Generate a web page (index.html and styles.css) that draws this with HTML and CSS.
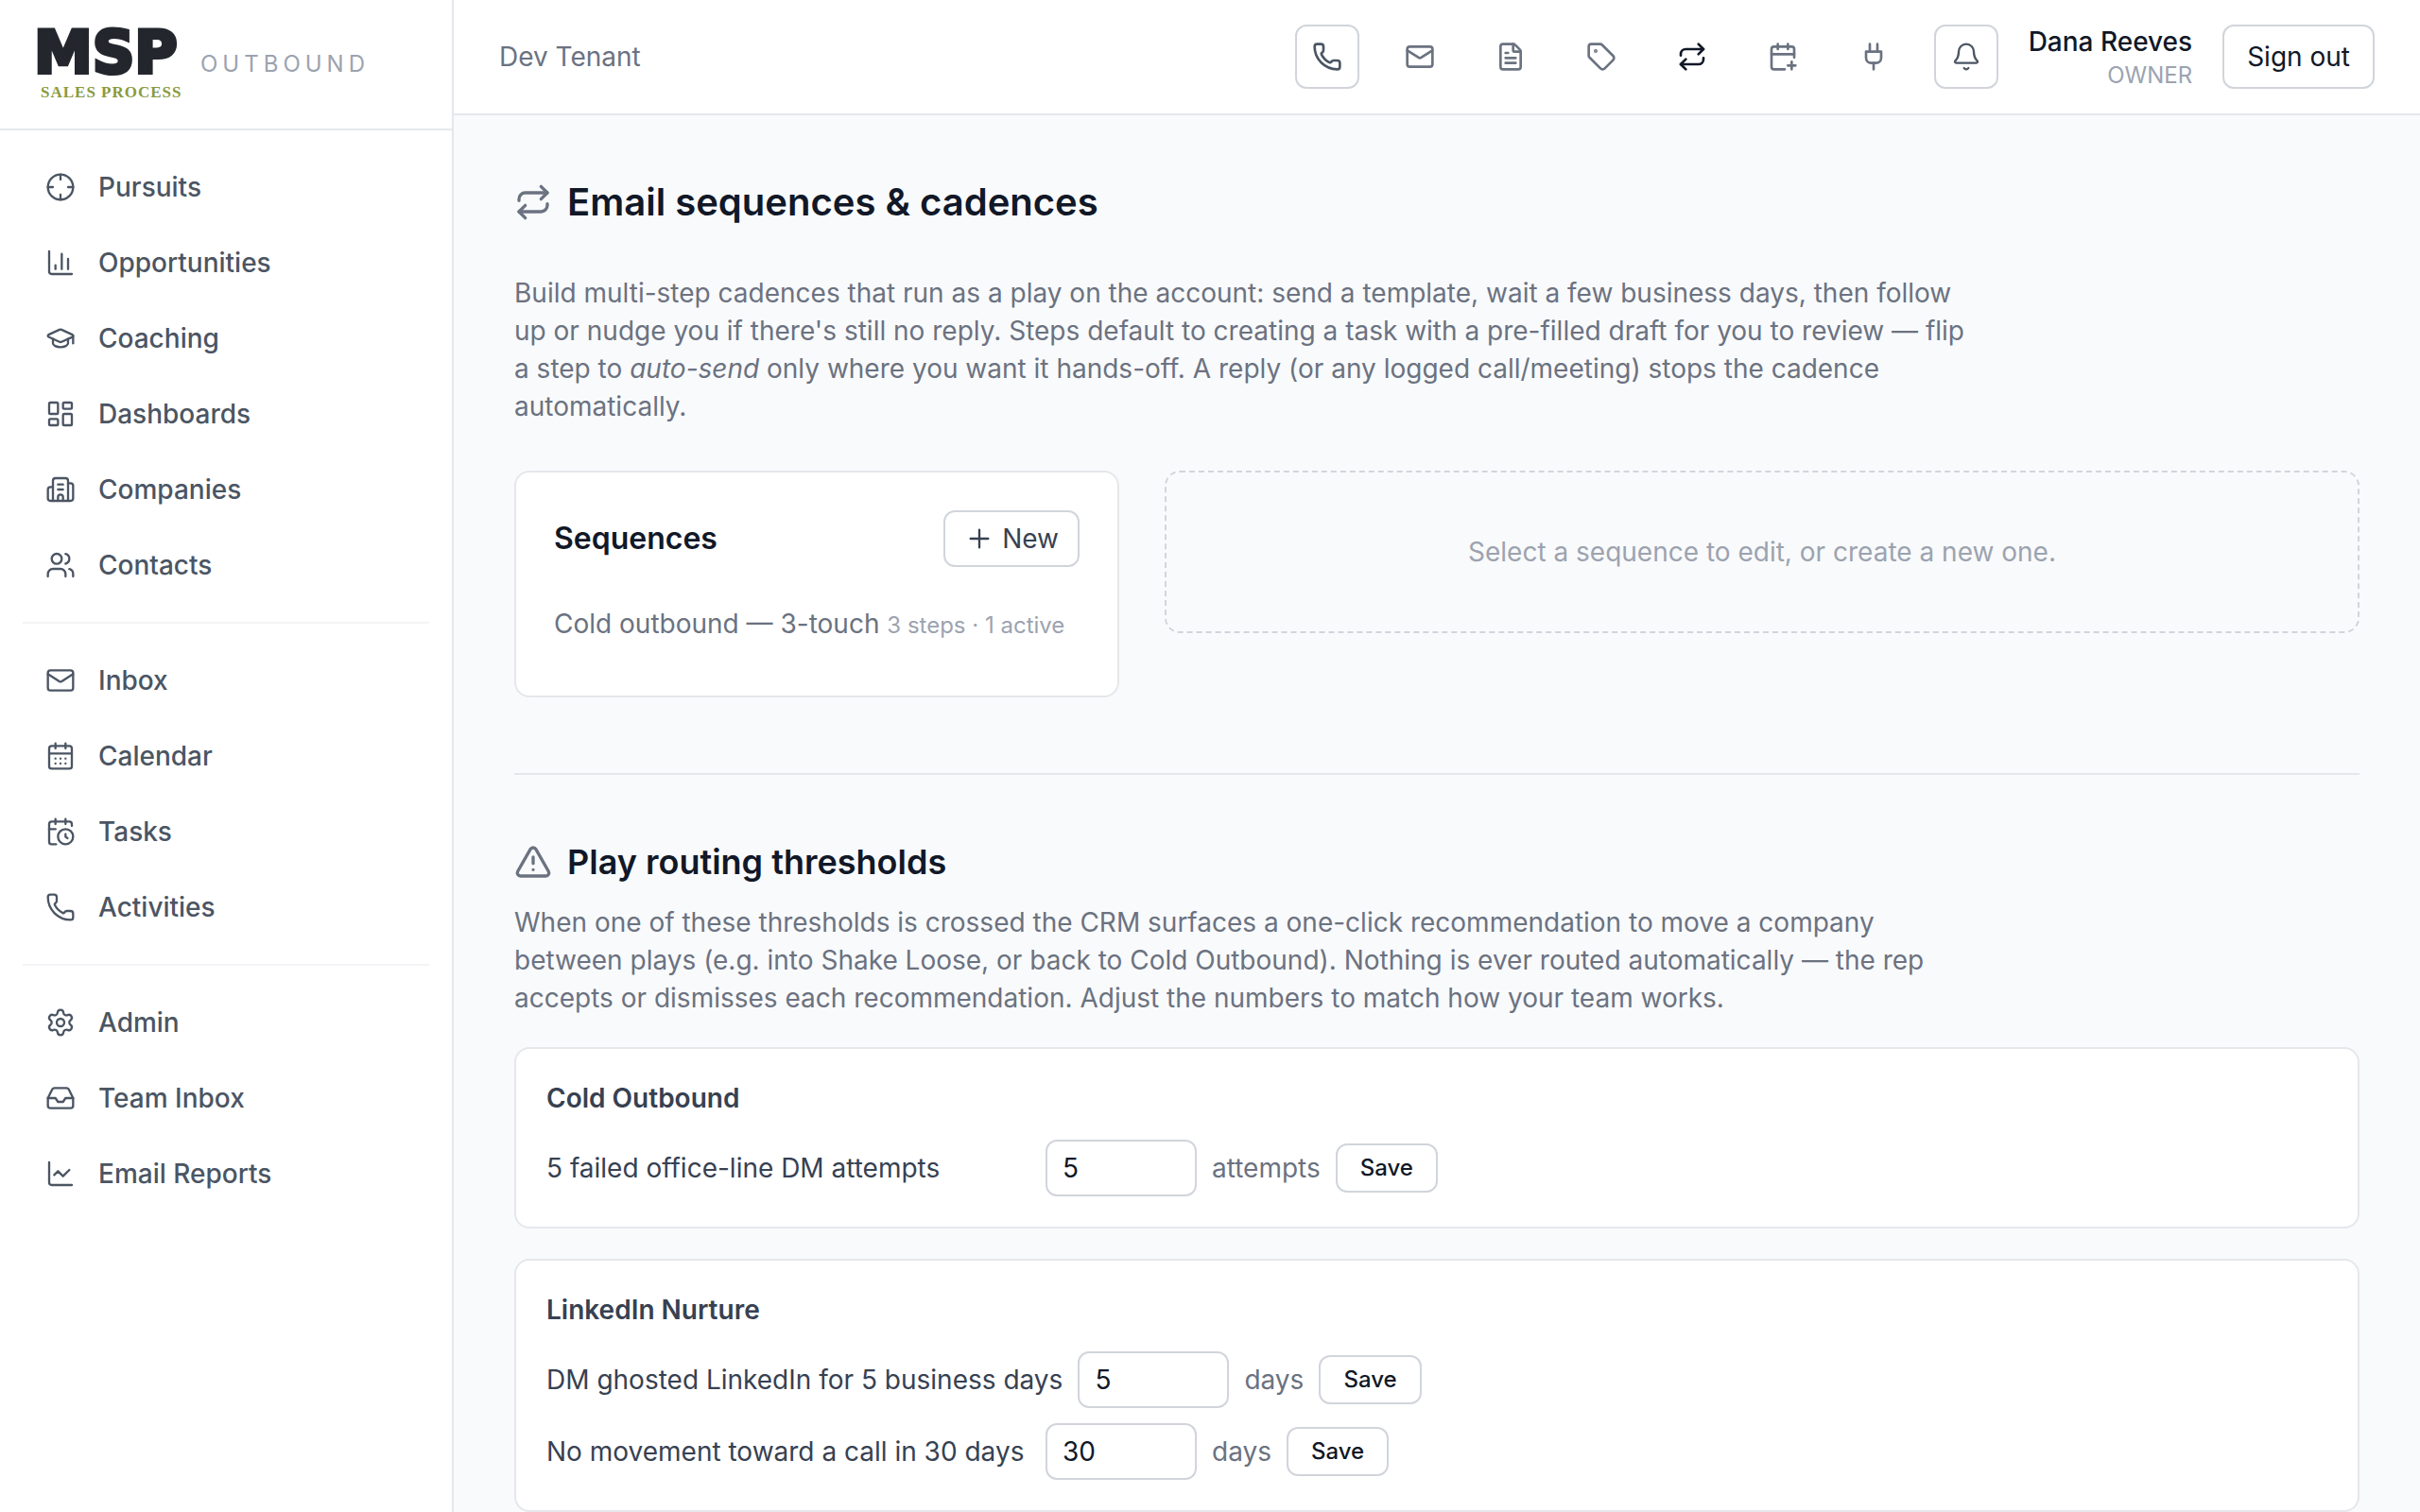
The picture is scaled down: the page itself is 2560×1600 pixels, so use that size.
FILE: index.html
```html
<!DOCTYPE html>
<html lang="en">
<head>
  <meta charset="UTF-8" />
  <meta name="viewport" content="width=device-width, initial-scale=1.0"/>
  <title>Email sequences & cadences</title>
  <link rel="stylesheet" href="styles.css">
</head>
<body>
  <div class="app">
    <aside class="sidebar">
      <div class="brand">
        <svg class="brand-logo" viewBox="0 0 156 72" role="img" aria-label="MSP Sales Process">
          <text class="logo-mark" x="-4" y="45">MSP</text>
          <text class="logo-sub" x="3" y="71">SALES PROCESS</text>
        </svg>
        <span class="brand-name">OUTBOUND</span>
      </div>

      <nav class="nav">
        <a href="#" class="nav-item">
          <svg class="icon" viewBox="0 0 24 24"><circle cx="12" cy="12" r="10"/><path d="M22 12h-4M6 12H2M12 6V2M12 22v-4"/></svg>
          Pursuits
        </a>
        <a href="#" class="nav-item">
          <svg class="icon" viewBox="0 0 24 24"><path d="M3 3v16a2 2 0 0 0 2 2h16M18 17V9M13 17V5M8 17v-3"/></svg>
          Opportunities
        </a>
        <a href="#" class="nav-item">
          <svg class="icon" viewBox="0 0 24 24"><path d="M21.42 10.922a1 1 0 0 0-.019-1.838L12.83 5.18a2 2 0 0 0-1.66 0L2.6 9.08a1 1 0 0 0 0 1.832l8.57 3.908a2 2 0 0 0 1.66 0z"/><path d="M22 10v6"/><path d="M6 12.5V16a6 3 0 0 0 12 0v-3.5"/></svg>
          Coaching
        </a>
        <a href="#" class="nav-item">
          <svg class="icon" viewBox="0 0 24 24"><rect width="7" height="9" x="3" y="3" rx="1"/><rect width="7" height="5" x="14" y="3" rx="1"/><rect width="7" height="9" x="14" y="12" rx="1"/><rect width="7" height="5" x="3" y="16" rx="1"/></svg>
          Dashboards
        </a>
        <a href="#" class="nav-item">
          <svg class="icon" viewBox="0 0 24 24"><path d="M10 12h4M10 8h4"/><path d="M14 21v-3a2 2 0 0 0-4 0v3"/><path d="M6 10H4a2 2 0 0 0-2 2v7a2 2 0 0 0 2 2h16a2 2 0 0 0 2-2V9a2 2 0 0 0-2-2h-2"/><path d="M6 21V5a2 2 0 0 1 2-2h8a2 2 0 0 1 2 2v16"/></svg>
          Companies
        </a>
        <a href="#" class="nav-item">
          <svg class="icon" viewBox="0 0 24 24"><path d="M16 21v-2a4 4 0 0 0-4-4H6a4 4 0 0 0-4 4v2"/><path d="M16 3.128a4 4 0 0 1 0 7.744"/><path d="M22 21v-2a4 4 0 0 0-3-3.87"/><circle cx="9" cy="7" r="4"/></svg>
          Contacts
        </a>

        <hr class="nav-divider">

        <a href="#" class="nav-item">
          <svg class="icon" viewBox="0 0 24 24"><path d="m22 7-8.991 5.727a2 2 0 0 1-2.009 0L2 7"/><rect x="2" y="4" width="20" height="16" rx="2"/></svg>
          Inbox
        </a>
        <a href="#" class="nav-item">
          <svg class="icon" viewBox="0 0 24 24"><path d="M8 2v4M16 2v4"/><rect width="18" height="18" x="3" y="4" rx="2"/><path d="M3 10h18M8 14h.01M12 14h.01M16 14h.01M8 18h.01M12 18h.01M16 18h.01"/></svg>
          Calendar
        </a>
        <a href="#" class="nav-item">
          <svg class="icon" viewBox="0 0 24 24"><path d="M16 14v2.2l1.6 1"/><path d="M16 2v4"/><path d="M21 7.5V6a2 2 0 0 0-2-2H5a2 2 0 0 0-2 2v14a2 2 0 0 0 2 2h3.5"/><path d="M3 10h5"/><path d="M8 2v4"/><circle cx="16" cy="16" r="6"/></svg>
          Tasks
        </a>
        <a href="#" class="nav-item">
          <svg class="icon" viewBox="0 0 24 24"><path d="M13.832 16.568a1 1 0 0 0 1.213-.303l.355-.465A2 2 0 0 1 17 15h3a2 2 0 0 1 2 2v3a2 2 0 0 1-2 2A18 18 0 0 1 2 4a2 2 0 0 1 2-2h3a2 2 0 0 1 2 2v3a2 2 0 0 1-.8 1.6l-.468.351a1 1 0 0 0-.292 1.233 14 14 0 0 0 6.392 6.384"/></svg>
          Activities
        </a>

        <hr class="nav-divider">

        <a href="#" class="nav-item">
          <svg class="icon" viewBox="0 0 24 24"><path d="M9.671 4.136a2.34 2.34 0 0 1 4.659 0 2.34 2.34 0 0 0 3.319 1.915 2.34 2.34 0 0 1 2.33 4.033 2.34 2.34 0 0 0 0 3.831 2.34 2.34 0 0 1-2.33 4.033 2.34 2.34 0 0 0-3.319 1.915 2.34 2.34 0 0 1-4.659 0 2.34 2.34 0 0 0-3.32-1.915 2.34 2.34 0 0 1-2.33-4.033 2.34 2.34 0 0 0 0-3.831A2.34 2.34 0 0 1 6.35 6.051a2.34 2.34 0 0 0 3.319-1.915"/><circle cx="12" cy="12" r="3"/></svg>
          Admin
        </a>
        <a href="#" class="nav-item">
          <svg class="icon" viewBox="0 0 24 24"><polyline points="22 12 16 12 14 15 10 15 8 12 2 12"/><path d="M5.45 5.11 2 12v6a2 2 0 0 0 2 2h16a2 2 0 0 0 2-2v-6l-3.45-6.89A2 2 0 0 0 16.76 4H7.24a2 2 0 0 0-1.79 1.11z"/></svg>
          Team Inbox
        </a>
        <a href="#" class="nav-item">
          <svg class="icon" viewBox="0 0 24 24"><path d="M3 3v16a2 2 0 0 0 2 2h16"/><path d="m19 9-5 5-4-4-3 3"/></svg>
          Email Reports
        </a>
      </nav>
    </aside>

    <div class="content">
      <header class="topbar">
        <span class="tenant">Dev Tenant</span>
        <div class="topbar-actions">
          <button type="button" class="icon-btn bordered" aria-label="Call">
            <svg class="icon icon-bold" viewBox="0 0 24 24"><path d="M13.832 16.568a1 1 0 0 0 1.213-.303l.355-.465A2 2 0 0 1 17 15h3a2 2 0 0 1 2 2v3a2 2 0 0 1-2 2A18 18 0 0 1 2 4a2 2 0 0 1 2-2h3a2 2 0 0 1 2 2v3a2 2 0 0 1-.8 1.6l-.468.351a1 1 0 0 0-.292 1.233 14 14 0 0 0 6.392 6.384"/></svg>
          </button>
          <a href="#" class="icon-btn" aria-label="Email">
            <svg class="icon icon-bold" viewBox="0 0 24 24"><path d="m22 7-8.991 5.727a2 2 0 0 1-2.009 0L2 7"/><rect x="2" y="4" width="20" height="16" rx="2"/></svg>
          </a>
          <a href="#" class="icon-btn" aria-label="Templates">
            <svg class="icon icon-bold" viewBox="0 0 24 24"><path d="M6 22a2 2 0 0 1-2-2V4a2 2 0 0 1 2-2h8a2.4 2.4 0 0 1 1.704.706l3.588 3.588A2.4 2.4 0 0 1 20 8v12a2 2 0 0 1-2 2z"/><path d="M14 2v5a1 1 0 0 0 1 1h5M10 9H8M16 13H8M16 17H8"/></svg>
          </a>
          <a href="#" class="icon-btn" aria-label="Tags">
            <svg class="icon icon-bold" viewBox="0 0 24 24"><path d="M12.586 2.586A2 2 0 0 0 11.172 2H4a2 2 0 0 0-2 2v7.172a2 2 0 0 0 .586 1.414l8.704 8.704a2.426 2.426 0 0 0 3.42 0l6.58-6.58a2.426 2.426 0 0 0 0-3.42z"/><circle cx="7.5" cy="7.5" r=".5" fill="currentColor"/></svg>
          </a>
          <a href="#" class="icon-btn active" aria-label="Sequences">
            <svg class="icon icon-bold" viewBox="0 0 24 24"><path d="m17 2 4 4-4 4"/><path d="M3 11v-1a4 4 0 0 1 4-4h14"/><path d="m7 22-4-4 4-4"/><path d="M21 13v1a4 4 0 0 1-4 4H3"/></svg>
          </a>
          <a href="#" class="icon-btn" aria-label="Scheduling">
            <svg class="icon icon-bold" viewBox="0 0 24 24"><path d="M16 19h6M16 2v4M19 16v6"/><path d="M21 12.598V6a2 2 0 0 0-2-2H5a2 2 0 0 0-2 2v14a2 2 0 0 0 2 2h8.5"/><path d="M3 10h18M8 2v4"/></svg>
          </a>
          <a href="#" class="icon-btn" aria-label="Integrations">
            <svg class="icon icon-bold" viewBox="0 0 24 24"><path d="M12 22v-5M9 8V2M15 8V2"/><path d="M18 8v5a4 4 0 0 1-4 4h-4a4 4 0 0 1-4-4V8Z"/></svg>
          </a>
          <button type="button" class="icon-btn bordered" aria-label="Notifications">
            <svg class="icon" viewBox="0 0 24 24"><path d="M10.268 21a2 2 0 0 0 3.464 0"/><path d="M3.262 15.326A1 1 0 0 0 4 17h16a1 1 0 0 0 .74-1.673C19.41 13.956 18 12.499 18 8A6 6 0 0 0 6 8c0 4.499-1.411 5.956-2.738 7.326"/></svg>
          </button>
          <div class="user">
            <div class="user-name">Dana Reeves</div>
            <div class="user-role">OWNER</div>
          </div>
          <button type="button" class="sign-out">Sign out</button>
        </div>
      </header>

      <main class="main">
        <h1 class="page-title">
          <svg class="icon icon-lg icon-bold" viewBox="0 0 24 24"><path d="m17 2 4 4-4 4"/><path d="M3 11v-1a4 4 0 0 1 4-4h14"/><path d="m7 22-4-4 4-4"/><path d="M21 13v1a4 4 0 0 1-4 4H3"/></svg>
          Email sequences &amp; cadences
        </h1>
        <p class="lead page-lead">Build multi-step cadences that run as a play on the account: send a template, wait a few business days, then follow up or nudge you if there's still no reply. Steps default to creating a task with a pre-filled draft for you to review — flip a step to <em>auto-send</em> only where you want it hands-off. A reply (or any logged call/meeting) stops the cadence automatically.</p>

        <div class="sequence-grid">
          <section class="card sequence-card">
            <div class="sequence-head">
              <h2 class="sequence-title">Sequences</h2>
              <button type="button" class="new-btn">
                <svg class="icon" viewBox="0 0 24 24"><path d="M5 12h14M12 5v14"/></svg>
                New
              </button>
            </div>
            <a href="#" class="sequence-item">Cold outbound — 3-touch <span class="sequence-meta">3 steps · 1 active</span></a>
          </section>
          <div class="empty-panel">Select a sequence to edit, or create a new one.</div>
        </div>

        <section class="routing">
          <h2 class="section-title">
            <svg class="icon icon-lg icon-bold" viewBox="0 0 24 24"><path d="m21.73 18-8-14a2 2 0 0 0-3.48 0l-8 14A2 2 0 0 0 4 21h16a2 2 0 0 0 1.73-3"/><path d="M12 9v4M12 17h.01"/></svg>
            Play routing thresholds
          </h2>
          <p class="lead section-lead">When one of these thresholds is crossed the CRM surfaces a one-click recommendation to move a company between plays (e.g. into Shake Loose, or back to Cold Outbound). Nothing is ever routed automatically — the rep accepts or dismisses each recommendation. Adjust the numbers to match how your team works.</p>

          <div class="play-list">
            <div class="card play-card">
              <h3 class="play-title">Cold Outbound</h3>
              <form class="threshold">
                <label class="threshold-label" for="failed-attempts">5 failed office-line DM attempts</label>
                <input class="threshold-input" id="failed-attempts" type="number" value="5">
                <span class="threshold-unit">attempts</span>
                <button type="button" class="save-btn">Save</button>
              </form>
            </div>

            <div class="card play-card">
              <h3 class="play-title">LinkedIn Nurture</h3>
              <form class="threshold">
                <label class="threshold-label" for="ghosted-days">DM ghosted LinkedIn for 5 business days</label>
                <input class="threshold-input" id="ghosted-days" type="number" value="5">
                <span class="threshold-unit">days</span>
                <button type="button" class="save-btn">Save</button>
              </form>
              <form class="threshold">
                <label class="threshold-label" for="no-movement-days">No movement toward a call in 30 days</label>
                <input class="threshold-input" id="no-movement-days" type="number" value="30">
                <span class="threshold-unit">days</span>
                <button type="button" class="save-btn">Save</button>
              </form>
            </div>
          </div>
        </section>
      </main>
    </div>
  </div>
</body>
</html>
```
FILE: styles.css
```css
:root {
  --text: #111827;
  --text-dark: #374151;
  --text-nav: #4b5563;
  --text-muted: #6b7280;
  --text-faint: #9ca3af;
  --border: #e5e7eb;
  --border-light: #f3f4f6;
  --border-control: #d1d5db;
  --bg: #f9fafc;
  --white: #ffffff;
  --logo-dark: #23262d;
  --logo-green: #8a9a3f;
}

* {
  margin: 0;
  padding: 0;
  box-sizing: border-box;
}

body {
  font-family: Inter, 'Liberation Sans', sans-serif;
  font-size: 28px;
  line-height: 40px;
  color: var(--text);
  background-color: var(--bg);
}

a {
  color: inherit;
  text-decoration: none;
}

button,
input {
  font: inherit;
  color: inherit;
  background-color: var(--white);
  border: 2px solid var(--border-control);
  border-radius: 12px;
}

button {
  cursor: pointer;
}

.app {
  display: flex;
  min-height: 100vh;
}

.icon {
  width: 32px;
  height: 32px;
  flex-shrink: 0;
  fill: none;
  stroke: currentColor;
  stroke-width: 1.75;
  stroke-linecap: round;
  stroke-linejoin: round;
}

.icon-bold {
  stroke-width: 2;
}

.icon-lg {
  width: 40px;
  height: 40px;
  color: var(--text-muted);
}

/* Sidebar */
.sidebar {
  width: 480px;
  flex-shrink: 0;
  background-color: var(--white);
  border-right: 2px solid var(--border);
}

.brand {
  display: flex;
  align-items: center;
  gap: 16px;
  padding: 32px 40px;
  border-bottom: 2px solid var(--border);
}

.brand-logo {
  width: 156px;
  height: 72px;
  overflow: visible;
}

.logo-mark {
  font-family: 'DejaVu Sans', sans-serif;
  font-size: 62px;
  font-weight: 700;
  fill: var(--logo-dark);
  stroke: var(--logo-dark);
  stroke-width: 4;
}

.logo-sub {
  font-family: 'Liberation Serif', serif;
  font-size: 17px;
  font-weight: 700;
  letter-spacing: 1px;
  fill: var(--logo-green);
}

.brand-name {
  font-size: 24px;
  line-height: 32px;
  letter-spacing: 5px;
  color: var(--text-faint);
}

.nav {
  display: flex;
  flex-direction: column;
  gap: 8px;
  padding: 24px;
}

.nav-item {
  display: flex;
  align-items: center;
  gap: 24px;
  padding: 16px 24px;
  border-radius: 12px;
  font-weight: 500;
  color: var(--text-nav);
}

.nav-item:hover {
  background-color: var(--border-light);
}

.nav-divider {
  border: none;
  border-top: 2px solid var(--border-light);
  margin: 16px 0;
}

/* Top bar */
.content {
  flex: 1;
  min-width: 0;
}

.topbar {
  display: flex;
  align-items: center;
  justify-content: space-between;
  padding: 24px 48px;
  background-color: var(--white);
  border-bottom: 2px solid var(--border);
}

.tenant {
  color: var(--text-muted);
}

.topbar-actions {
  display: flex;
  align-items: center;
  gap: 32px;
}

.icon-btn {
  display: flex;
  padding: 16px;
  color: var(--text-muted);
}

.icon-btn.bordered {
  color: var(--text-nav);
}

.icon-btn.active {
  color: var(--text);
}

.user {
  text-align: right;
}

.user-name {
  font-weight: 500;
}

.user-role {
  font-size: 24px;
  line-height: 32px;
  color: var(--text-faint);
}

.sign-out {
  padding: 12px 24px;
}

/* Page */
.main {
  padding: 64px 64px 0;
}

.page-title,
.section-title {
  display: flex;
  align-items: center;
  gap: 16px;
  font-weight: 600;
  line-height: 56px;
}

.page-title {
  font-size: 40px;
}

.section-title {
  font-size: 36px;
}

.lead {
  max-width: 1536px;
  color: var(--text-muted);
}

.page-lead {
  margin: 48px 0;
}

.section-lead {
  margin: 16px 0 32px;
}

.card {
  background-color: var(--white);
  border: 2px solid var(--border);
  border-radius: 16px;
}

.sequence-grid {
  display: grid;
  grid-template-columns: 640px 1fr;
  align-items: start;
  gap: 48px;
}

.sequence-card {
  padding: 40px;
}

.sequence-head {
  display: flex;
  align-items: center;
  justify-content: space-between;
  margin-bottom: 24px;
}

.sequence-title {
  font-size: 32px;
  font-weight: 600;
}

.new-btn {
  display: flex;
  align-items: center;
  gap: 8px;
  padding: 8px 20px;
  color: var(--text-dark);
}

.sequence-item {
  display: block;
  padding: 16px 0;
  color: var(--text-muted);
}

.sequence-meta {
  font-size: 24px;
  line-height: 32px;
  color: var(--text-faint);
}

.empty-panel {
  padding: 64px;
  border: 2px dashed var(--border-control);
  border-radius: 16px;
  text-align: center;
  color: var(--text-faint);
}

/* Routing thresholds */
.routing {
  margin-top: 80px;
  padding-top: 64px;
  border-top: 2px solid var(--border);
}

.play-list {
  display: flex;
  flex-direction: column;
  gap: 32px;
}

.play-card {
  padding: 32px;
}

.play-title {
  margin-bottom: 24px;
  font-size: 28px;
  font-weight: 600;
  color: var(--text-dark);
}

.threshold {
  display: flex;
  align-items: center;
  gap: 16px;
}

.threshold + .threshold {
  margin-top: 16px;
}

.threshold-label {
  min-width: 512px;
  color: var(--text-dark);
}

.threshold-input {
  width: 160px;
  height: 60px;
  padding: 8px 16px;
}

.threshold-unit {
  color: var(--text-muted);
}

.save-btn {
  padding: 8px 24px;
  font-size: 24px;
  line-height: 32px;
  font-weight: 500;
}
```
